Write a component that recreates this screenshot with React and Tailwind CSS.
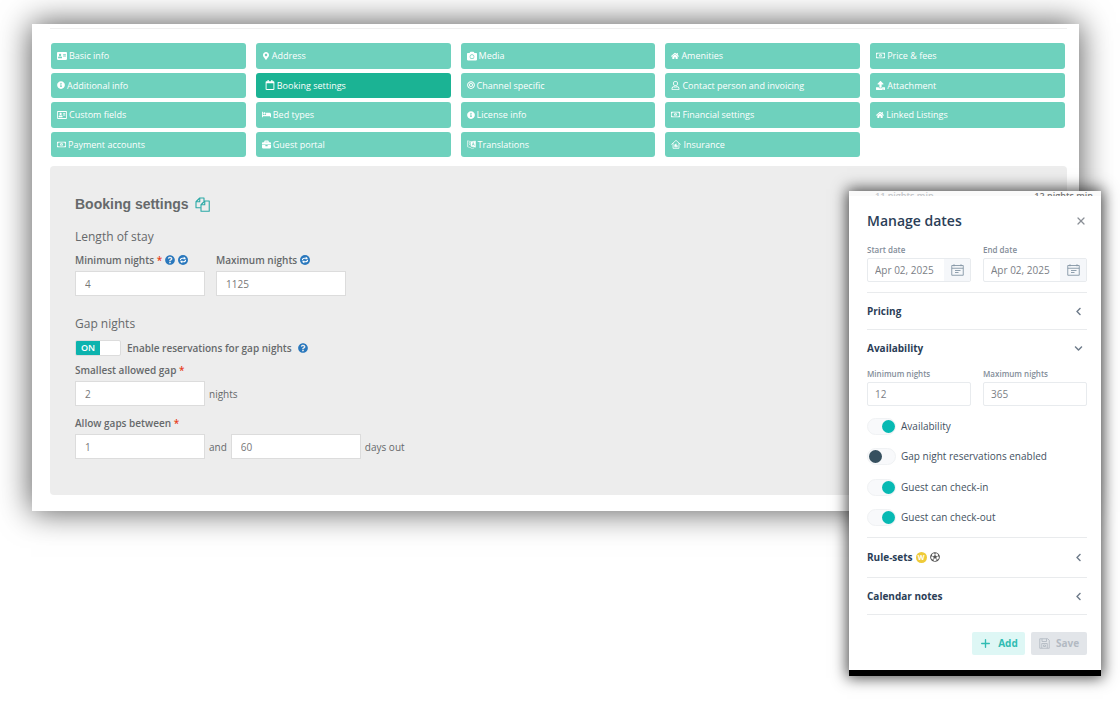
import { useState } from 'react';
import {
  FaAddressCard, FaBed, FaBullseye, FaCamera, FaChevronDown, FaChevronLeft, FaHome, FaInfoCircle, FaMapMarkerAlt,
  FaQuestionCircle, FaRegAddressCard, FaRegCalendar, FaRegFutbol, FaRegMoneyBillAlt, FaRegUser, FaBriefcase, FaUpload,
} from 'react-icons/fa';
import { Plus, X } from 'lucide-react';

const TABS = [
  { label: 'Basic info', icon: FaAddressCard, size: 10 },
  { label: 'Address', icon: FaMapMarkerAlt, size: 8 },
  { label: 'Media', icon: FaCamera, size: 10 },
  { label: 'Amenities', icon: FaHome, size: 8 },
  { label: 'Price & fees', icon: FaRegMoneyBillAlt, size: 9 },
  { label: 'Additional info', icon: FaInfoCircle, size: 8 },
  { label: 'Booking settings', icon: FaRegCalendar, size: 10, active: true },
  { label: 'Channel specific', icon: FaBullseye, size: 8 },
  { label: 'Contact person and invoicing', icon: FaRegUser, size: 9 },
  { label: 'Attachment', icon: FaUpload, size: 9 },
  { label: 'Custom fields', icon: FaRegAddressCard, size: 10 },
  { label: 'Bed types', icon: FaBed, size: 9 },
  { label: 'License info', icon: FaInfoCircle, size: 8 },
  { label: 'Financial settings', icon: FaRegMoneyBillAlt, size: 9 },
  { label: 'Linked Listings', icon: FaHome, size: 8 },
  { label: 'Payment accounts', icon: FaRegMoneyBillAlt, size: 9 },
  { label: 'Guest portal', icon: FaBriefcase, size: 9 },
  { label: 'Translations', icon: TranslateIcon, size: 9 },
  { label: 'Insurance', icon: InsuranceIcon, size: 10 },
];

function TranslateIcon({ size, className }) {
  return (
    <svg width={size} height={size} viewBox="0 0 18 18" className={className} fill="none" stroke="currentColor">
      <path d="M8 3.500 1 1.500v12l7 2" strokeWidth="1.200" />
      <path d="M3 5.500h4M5 4.500v1M6.500 6c-.5 2-1.500 3.500-3.500 4.500M3.500 7c.8 1.500 2 2.500 3.500 3" strokeWidth="1" />
      <path d="m8 3.500 9-1.500v12.500l-9-2z" fill="currentColor" />
      <path d="m10.500 11 2-6 2.200 6.500M11.200 9h2.800" stroke="#6ed1bd" strokeWidth="1.300" />
      <path d="M8 16.500c2 .8 4 .8 6-.3" />
    </svg>
  );
}

function InsuranceIcon({ size, className }) {
  return (
    <svg width={size} height={size} viewBox="0 0 22 22" className={className} fill="none" stroke="currentColor" strokeWidth="1.800" strokeLinecap="round" strokeLinejoin="round">
      <path d="M1.500 11.500 11 3l9.500 8.500M4.500 10v10.500h13V10" />
      <path d="M8 17v-4.500l3.500-2v4h2.500V17z" fill="currentColor" strokeWidth="1" />
    </svg>
  );
}

function CopyIcon() {
  return (
    <svg width="15" height="15" viewBox="0 0 30 30" fill="none" stroke="currentColor" strokeWidth="2.200" strokeLinejoin="round">
      <path d="M11.500 21.500H2V9.500L9.500 2H18v6" />
      <path d="M9.500 2v7.500H2" />
      <path d="M12 15.500 19.500 8H28.500v20.500H12z" />
      <path d="M19.500 8v7.500H12" />
    </svg>
  );
}

function SyncIcon() {
  return (
    <svg width="10" height="10" viewBox="0 0 20 20">
      <circle cx="10" cy="10" r="10" fill="#2a78bd" />
      <path d="M4.800 10.500c0-2.800 1.700-4 4-4H12M15.200 9.500c0 2.800-1.700 4-4 4H8" fill="none" stroke="#fff" strokeWidth="2.200" />
      <path d="m11.500 3.500 4.500 3-4.500 3zM8.500 10.500l-4.500 3 4.500 3z" fill="#fff" />
    </svg>
  );
}

function DateIcon() {
  return (
    <svg width="13" height="12" viewBox="0 0 26 24" fill="none" stroke="currentColor" strokeWidth="1.800">
      <path d="M1.500 3h23v19.500h-23zM1.500 8.500h23M6 .5v4M20 .5v4M8 13h11M8 17h7" />
    </svg>
  );
}

function SaveIcon() {
  return (
    <svg width="11" height="11" viewBox="0 0 22 22" fill="none" stroke="currentColor" strokeWidth="1.800">
      <path d="M1.500 1.500h16l3 3v16h-19z" />
      <path d="M6 1.500v5.500h9V1.500M5.500 20.500V11h11v9.500M9 14h4v3H9z" />
    </svg>
  );
}

function Required() {
  return <span className="text-[#e8401c]">*</span>;
}

function Field({ id, value, label }) {
  return (
    <input
      id={id}
      aria-label={label}
      defaultValue={value}
      className="h-[25px] w-[130px] border border-[#dcdcdc] bg-white px-[9px] text-[10px] text-[#777] outline-none"
    />
  );
}

function DateField({ id, label }) {
  return (
    <div className="min-w-0 flex-1">
      <label htmlFor={id} className="block text-[8px] leading-3 font-semibold text-[#838d99]">{label}</label>
      <div className="mt-0.5 flex h-6 overflow-hidden rounded-xs border border-[#e8ebee]">
        <input id={id} defaultValue="Apr 02, 2025" className="min-w-0 flex-1 pl-[7px] text-[10px] text-[#7b8086] outline-none" />
        <button aria-label={`Pick ${label.toLowerCase()}`} className="flex w-[26px] items-center justify-center bg-[#f5f7fa] text-[#8595a5]">
          <DateIcon />
        </button>
      </div>
    </div>
  );
}

function NightsField({ id, label, value }) {
  return (
    <div className="min-w-0 flex-1">
      <label htmlFor={id} className="block text-[8px] leading-3 font-semibold text-[#838d99]">{label}</label>
      <input id={id} defaultValue={value} className="mt-0.5 h-6 w-full rounded-xs border border-[#e8ebee] px-[7px] text-[10px] text-[#7b8086] outline-none" />
    </div>
  );
}

function Toggle({ label, initial }) {
  const [on, setOn] = useState(initial);
  return (
    <label className="flex items-center gap-[5px] text-[10px] leading-[17px] text-[#44515f]">
      <input
        type="checkbox"
        checked={on}
        onChange={(e) => setOn(e.target.checked)}
        className="h-[17px] w-[29px] appearance-none rounded-full border border-[#f0f2f4] bg-[#f8f9fb] p-px before:block before:size-[13px] before:rounded-full before:bg-[#36505f] checked:before:translate-x-[13px] checked:before:bg-[#07b9b3]"
      />
      {label}
    </label>
  );
}

function SectionButton({ children, open }) {
  const Icon = open ? FaChevronDown : FaChevronLeft;
  return (
    <button aria-expanded={!!open} className="flex w-full items-center pr-1 text-left text-[10px] leading-4 font-bold text-[#2b3e57]">
      {children}
      <Icon size={9} className="ml-auto text-[#6e7b8a]" />
    </button>
  );
}

function BookingSettings() {
  const [gaps, setGaps] = useState(true);
  return (
    <section className="mt-[9px] rounded-sm bg-[#ededed] px-[25px] pt-7 pb-9 text-[#66696b]">
      <h2 className="flex h-5 items-center gap-1.5 font-['Liberation_Sans',sans-serif] text-[14px] font-bold">
        Booking settings
        <button aria-label="Copy settings" className="text-[#2ba9a6]"><CopyIcon /></button>
      </h2>

      <h3 className="mt-[15px] text-[12px] leading-4 font-medium">Length of stay</h3>
      <div className="mt-2 flex gap-[11px]">
        <div>
          <div className="flex h-3.5 items-center gap-[3px] text-[10px] font-semibold">
            <label htmlFor="min-stay">Minimum nights <Required /></label>
            <FaQuestionCircle size={10} className="text-[#2a78bd]" />
            <SyncIcon />
          </div>
          <div className="mt-1 flex"><Field id="min-stay" value="4" /></div>
        </div>
        <div>
          <div className="flex h-3.5 items-center gap-[3px] text-[10px] font-semibold">
            <label htmlFor="max-stay">Maximum nights</label>
            <SyncIcon />
          </div>
          <div className="mt-1 flex"><Field id="max-stay" value="1125" /></div>
        </div>
      </div>

      <h3 className="mt-5 text-[12px] leading-4 font-medium">Gap nights</h3>
      <div className="mt-2 flex h-4 items-center gap-1.5 text-[10px] font-semibold">
        <input
          id="gap-enabled"
          type="checkbox"
          checked={gaps}
          onChange={(e) => setGaps(e.target.checked)}
          className="flex h-4 w-[46px] appearance-none overflow-hidden rounded-xs border border-[#dcdcdc] bg-white before:h-full before:w-6 before:bg-[#bbb] before:text-center before:text-[9px] before:leading-[14px] before:text-white before:content-['OFF'] checked:before:bg-[#0cb3ae] checked:before:content-['ON']"
        />
        <label htmlFor="gap-enabled">Enable reservations for gap nights</label>
        <FaQuestionCircle size={10} className="text-[#2a78bd]" />
      </div>

      <label htmlFor="smallest-gap" className="mt-[7px] block text-[10px] leading-3.5 font-semibold">
        Smallest allowed gap <Required />
      </label>
      <div className="mt-1 flex items-center gap-1 text-[10px] leading-4">
        <Field id="smallest-gap" value="2" />
        <span>nights</span>
      </div>

      <label htmlFor="gap-from" className="mt-2.5 block text-[10px] leading-3.5 font-semibold">
        Allow gaps between <Required />
      </label>
      <div className="mt-1 flex items-center gap-1 text-[10px] leading-4">
        <Field id="gap-from" value="1" />
        <span>and</span>
        <Field id="gap-to" value="60" label="Last day out" />
        <span>days out</span>
      </div>
    </section>
  );
}

function ManageDates() {
  return (
    <aside className="absolute top-[191px] right-[19px] w-[252px] border-b-[6px] border-black bg-white shadow-[0_0_14px_2px_rgba(0,0,0,0.7)]">
      {/* bottom edge of the calendar row behind the drawer */}
      <div className="flex h-[5px] justify-between overflow-hidden bg-[#fafafa] pr-2 pl-[26px] text-[9px] leading-[9px] font-semibold">
        <span className="text-[#c4c7ca]">11 nights min</span>
        <span className="text-[#777]">12 nights min</span>
      </div>

      <div className="pr-3.5 pb-[15px] pl-[18px]">
        <div className="flex items-center justify-between pt-[15px]">
          <h2 className="text-[14px] leading-5 font-semibold text-[#2b3e57]">Manage dates</h2>
          <button aria-label="Close" className="text-[#8a8f96]"><X size={12} strokeWidth={2.5} /></button>
        </div>

        <div className="mt-[13px] flex gap-3 border-b border-[#e9ebed] pb-2.5">
          <DateField id="start-date" label="Start date" />
          <DateField id="end-date" label="End date" />
        </div>

        <div className="border-b border-[#e9ebed] py-2.5">
          <SectionButton>Pricing</SectionButton>
        </div>

        <div className="border-b border-[#e9ebed] pt-2.5 pb-[11px]">
          <SectionButton open>Availability</SectionButton>
          <div className="mt-3 flex gap-3">
            <NightsField id="min-nights" label="Minimum nights" value="12" />
            <NightsField id="max-nights" label="Maximum nights" value="365" />
          </div>
          <div className="mt-3 flex h-[108px] flex-col justify-between">
            <Toggle label="Availability" initial />
            <Toggle label="Gap night reservations enabled" initial={false} />
            <Toggle label="Guest can check-in" initial />
            <Toggle label="Guest can check-out" initial />
          </div>
        </div>

        <div className="border-b border-[#e9ebed] pt-[11px] pb-3">
          <SectionButton>
            Rule-sets
            <span className="ml-[3px] flex size-[11px] items-center justify-center rounded-full bg-[#efcb3a] text-[7px] leading-none text-white">W</span>
            <FaRegFutbol size={10} className="ml-[3px] text-[#555]" />
          </SectionButton>
        </div>

        <div className="border-b border-[#e9ebed] py-2.5">
          <SectionButton>Calendar notes</SectionButton>
        </div>

        <div className="mt-[17px] flex justify-end gap-1.5 text-[10px] font-bold">
          <button className="flex h-[23px] w-[53px] items-center justify-center gap-1.5 rounded-xs bg-[#def7f5] text-[#30bcb3]">
            <Plus size={13} strokeWidth={2.5} /> Add
          </button>
          <button disabled className="flex h-[23px] w-14 items-center justify-center gap-1.5 rounded-xs bg-[#e2e5e9] text-[#b3bac3]">
            <SaveIcon /> Save
          </button>
        </div>
      </div>
    </aside>
  );
}

export default function App() {
  return (
    <div className="relative min-h-screen overflow-hidden bg-white font-['Open_Sans','Noto_Sans',sans-serif]">
      <main className="mt-6 mr-[41px] ml-8 bg-white pt-1 pr-3 pb-4 pl-[18px] shadow-[0_0_30px_1px_rgba(0,0,0,0.65)]">
        <div className="border-t border-[#efefef]" />
        <nav className="mt-3.5 grid h-[114px] grid-cols-5 grid-rows-4 gap-x-2.5 gap-y-1 pr-0.5 pl-px">
          {TABS.map(({ label, icon: Icon, size, active }) => (
            <button
              key={label}
              className={`flex items-center gap-0.5 rounded-[3px] text-left text-[9px] font-medium text-white ${active ? 'bg-[#1bb394] px-[9px]' : 'bg-[#6ed1bd] px-1.5'}`}
            >
              <Icon size={size} className="w-auto shrink-0" />
              {label}
            </button>
          ))}
        </nav>
        <BookingSettings />
      </main>
      <ManageDates />
    </div>
  );
}
